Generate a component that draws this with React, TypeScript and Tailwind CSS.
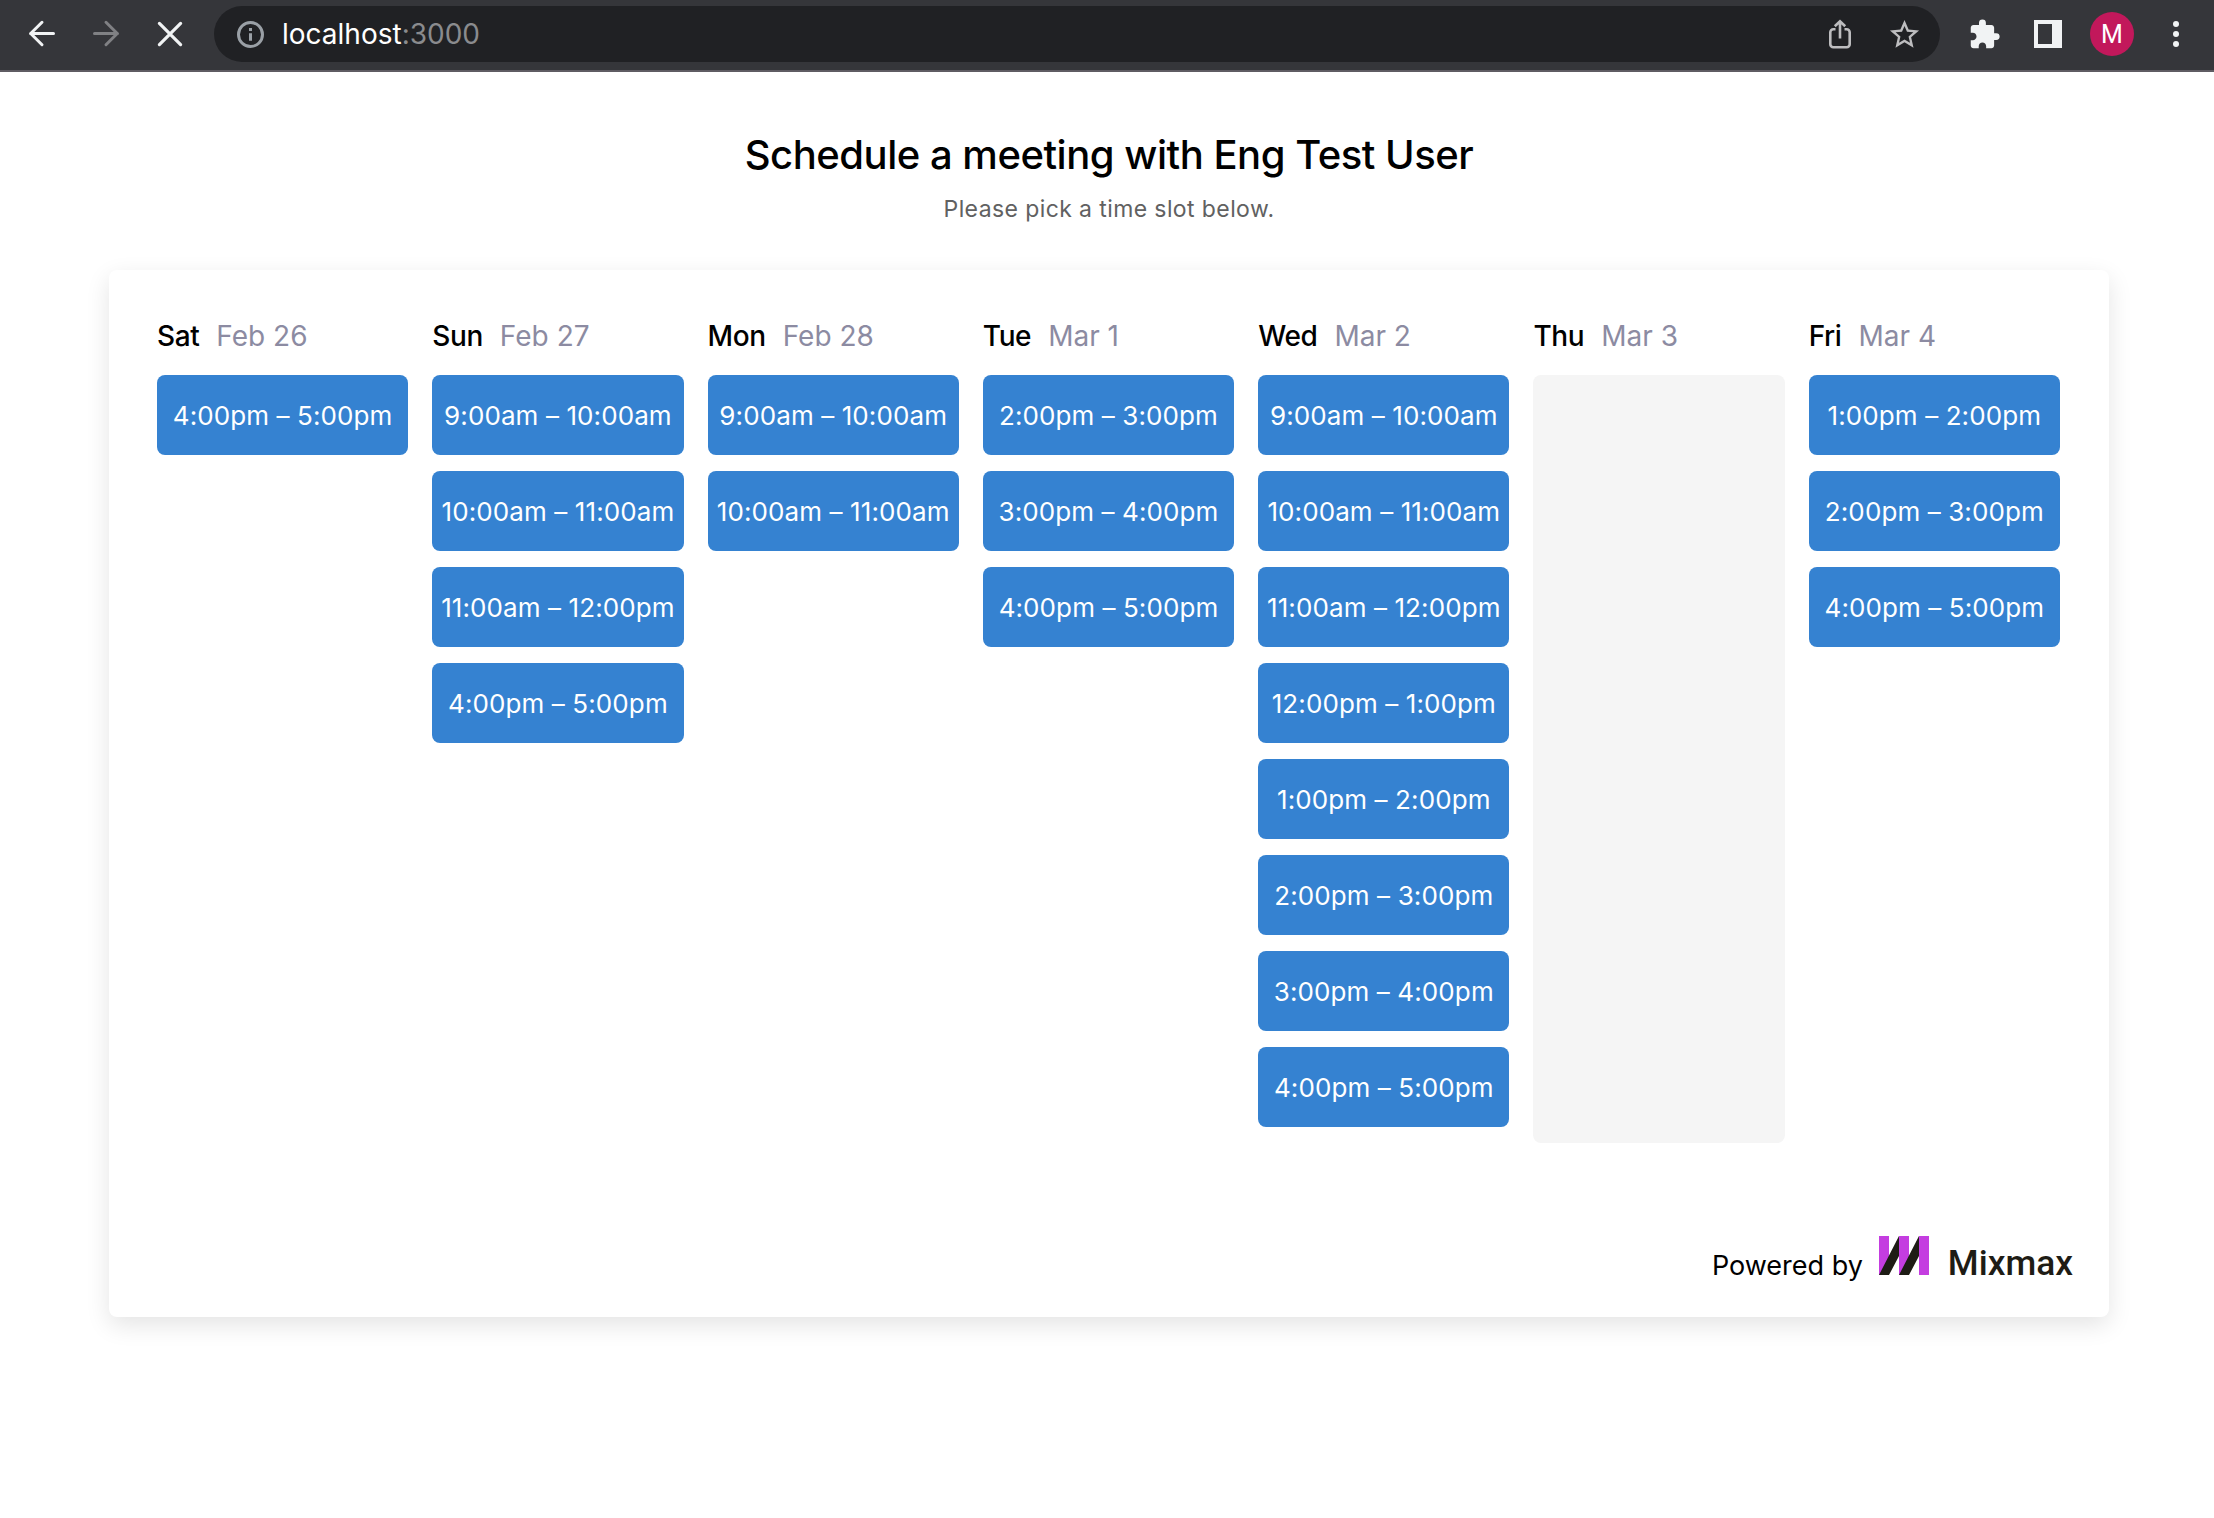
import { MdExtension, MdStarBorder } from "react-icons/md";

type Day = { name: string; date: string; slots: string[] };

const days: Day[] = [
  { name: "Sat", date: "Feb 26", slots: ["4:00pm – 5:00pm"] },
  {
    name: "Sun",
    date: "Feb 27",
    slots: ["9:00am – 10:00am", "10:00am – 11:00am", "11:00am – 12:00pm", "4:00pm – 5:00pm"],
  },
  { name: "Mon", date: "Feb 28", slots: ["9:00am – 10:00am", "10:00am – 11:00am"] },
  { name: "Tue", date: "Mar 1", slots: ["2:00pm – 3:00pm", "3:00pm – 4:00pm", "4:00pm – 5:00pm"] },
  {
    name: "Wed",
    date: "Mar 2",
    slots: [
      "9:00am – 10:00am",
      "10:00am – 11:00am",
      "11:00am – 12:00pm",
      "12:00pm – 1:00pm",
      "1:00pm – 2:00pm",
      "2:00pm – 3:00pm",
      "3:00pm – 4:00pm",
      "4:00pm – 5:00pm",
    ],
  },
  { name: "Thu", date: "Mar 3", slots: [] },
  { name: "Fri", date: "Mar 4", slots: ["1:00pm – 2:00pm", "2:00pm – 3:00pm", "4:00pm – 5:00pm"] },
];

const toolButton = "flex h-11 w-16 shrink-0 items-center justify-center";

function Toolbar() {
  return (
    <header className="flex h-[72px] items-start border-b-2 border-[#5f5c63] bg-[#35363a] pt-[6px] pr-[6px] pl-[10px]">
      <div className="flex pt-[6px]">
        <button className={toolButton} aria-label="Back">
          <svg width="28" height="28" viewBox="0 0 28 28" fill="none" stroke="#f1f3f4" strokeWidth="3" strokeLinecap="round" strokeLinejoin="round">
            <path d="M25.5 13.5H2.5M14 2.3 2.7 13.5 14 24.7" />
          </svg>
        </button>
        <button className={toolButton} aria-label="Forward">
          <svg width="28" height="28" viewBox="0 0 28 28" fill="none" stroke="#808184" strokeWidth="3" strokeLinecap="round" strokeLinejoin="round">
            <path d="M2.5 13.5h23M14 2.3l11.3 11.2L14 24.7" />
          </svg>
        </button>
        <button className={toolButton} aria-label="Stop">
          <svg width="28" height="28" viewBox="0 0 28 28" fill="none" stroke="#f1f3f4" strokeWidth="3.2" strokeLinecap="round">
            <path d="m3.4 3.4 21.2 21.2M24.6 3.4 3.4 24.6" />
          </svg>
        </button>
      </div>
      <div className="mx-3 flex h-14 flex-1 items-center rounded-full bg-[#202124] pr-1 pl-[23px]">
        <svg width="27" height="27" viewBox="0 0 27 27" fill="none" stroke="#9aa0a6">
          <circle cx="13.5" cy="13.5" r="12" strokeWidth="3" />
          <path d="M13.5 12.2v7.6M13.5 7v3" strokeWidth="3" />
        </svg>
        <p className="ml-[18px] text-[28px] leading-8 text-[#8a8b8e]">
          <span className="text-white">localhost</span>:3000
        </p>
        <div className="ml-auto flex">
          <button className={toolButton} aria-label="Share">
            <svg width="24" height="30" viewBox="0 0 24 30" fill="none" stroke="#bdbdbf" strokeWidth="2.6">
              <path d="M7.5 10.3H5.3a3 3 0 0 0-3 3v12a3 3 0 0 0 3 3h13.4a3 3 0 0 0 3-3v-12a3 3 0 0 0-3-3h-2.2M12 19.5V3M6.8 7.2 12 2.2l5.2 5" />
            </svg>
          </button>
          <button className={toolButton} aria-label="Bookmark">
            <MdStarBorder size={35} color="#bdbdbf" />
          </button>
        </div>
      </div>
      <div className="flex pt-[6px]">
        <button className={toolButton} aria-label="Extensions">
          <MdExtension size={33} color="#f1f3f4" />
        </button>
        <button className={toolButton} aria-label="Side panel">
          <span className="flex h-7 w-7 border-4 border-r-10 border-[#f1f3f4]" />
        </button>
        <button className={toolButton} aria-label="Profile">
          <span className="flex h-11 w-11 items-center justify-center rounded-full bg-[#c2185b] font-[Roboto] text-[25px] leading-none text-white">
            M
          </span>
        </button>
        <button className={toolButton} aria-label="Menu">
          <svg width="6" height="26" viewBox="0 0 6 26" fill="#f1f3f4">
            <circle cx="3" cy="3" r="3" />
            <circle cx="3" cy="13" r="3" />
            <circle cx="3" cy="23" r="3" />
          </svg>
        </button>
      </div>
    </header>
  );
}

function DayColumn({ day }: { day: Day }) {
  return (
    <section className="min-w-0">
      <h2 className="flex h-8 gap-[17px] text-[28px] leading-[34px] whitespace-nowrap">
        <span className="font-medium tracking-[-0.4px] text-black">{day.name}</span>
        <span className="text-[#8c8ba2]">{day.date}</span>
      </h2>
      {day.slots.length > 0 ? (
        <div className="mt-6 flex flex-col gap-4">
          {day.slots.map((slot) => (
            <button
              key={slot}
              className="h-20 rounded-lg bg-[#3582d1] pt-px text-center text-[26px] tracking-[0.1px] whitespace-nowrap text-white"
            >
              {slot}
            </button>
          ))}
        </div>
      ) : (
        <div className="mt-6 h-[768px] rounded-lg bg-[#f5f5f5]" />
      )}
    </section>
  );
}

function MixmaxMark() {
  return (
    <svg width="50" height="39" viewBox="0 0 50 39">
      <path fill="#c43de0" d="M0 0h10v39H0zM20 0h10v39H20zM40 0h10v39H40z" />
      <path fill="#1e1c15" d="M20 0v20L10 39H0zM40 0v20L30 39H20z" />
    </svg>
  );
}

export default function App() {
  return (
    <div className="min-h-[1518px] bg-white font-[Inter,sans-serif]">
      <Toolbar />
      <main className="flex flex-col items-center pl-1">
        <h1 className="mt-[59px] text-[40px] leading-[48px] font-medium tracking-[-0.48px] text-black">
          Schedule a meeting with Eng Test User
        </h1>
        <p className="mt-[14px] text-[23px] leading-8 tracking-[0.4px] text-[#616161]">Please pick a time slot below.</p>
        <div className="mt-[45px] flex h-[1047px] w-[2000px] flex-col rounded-lg bg-white px-12 pt-[49px] shadow-[0_8px_24px_rgba(0,0,0,0.11)]">
          <div className="mr-px grid grid-cols-7 gap-6">
            {days.map((day) => (
              <DayColumn key={day.name} day={day} />
            ))}
          </div>
          <footer className="mt-auto -mr-3 mb-[42px] flex items-end justify-end text-black">
            <span className="mb-[-7px] text-[27px] leading-8">Powered by</span>
            <span className="ml-4">
              <MixmaxMark />
            </span>
            <span className="mb-[-8px] ml-[19px] font-[Roboto] text-[35.3px] leading-10 font-medium text-[#1e1c15]">Mixmax</span>
          </footer>
        </div>
      </main>
    </div>
  );
}
